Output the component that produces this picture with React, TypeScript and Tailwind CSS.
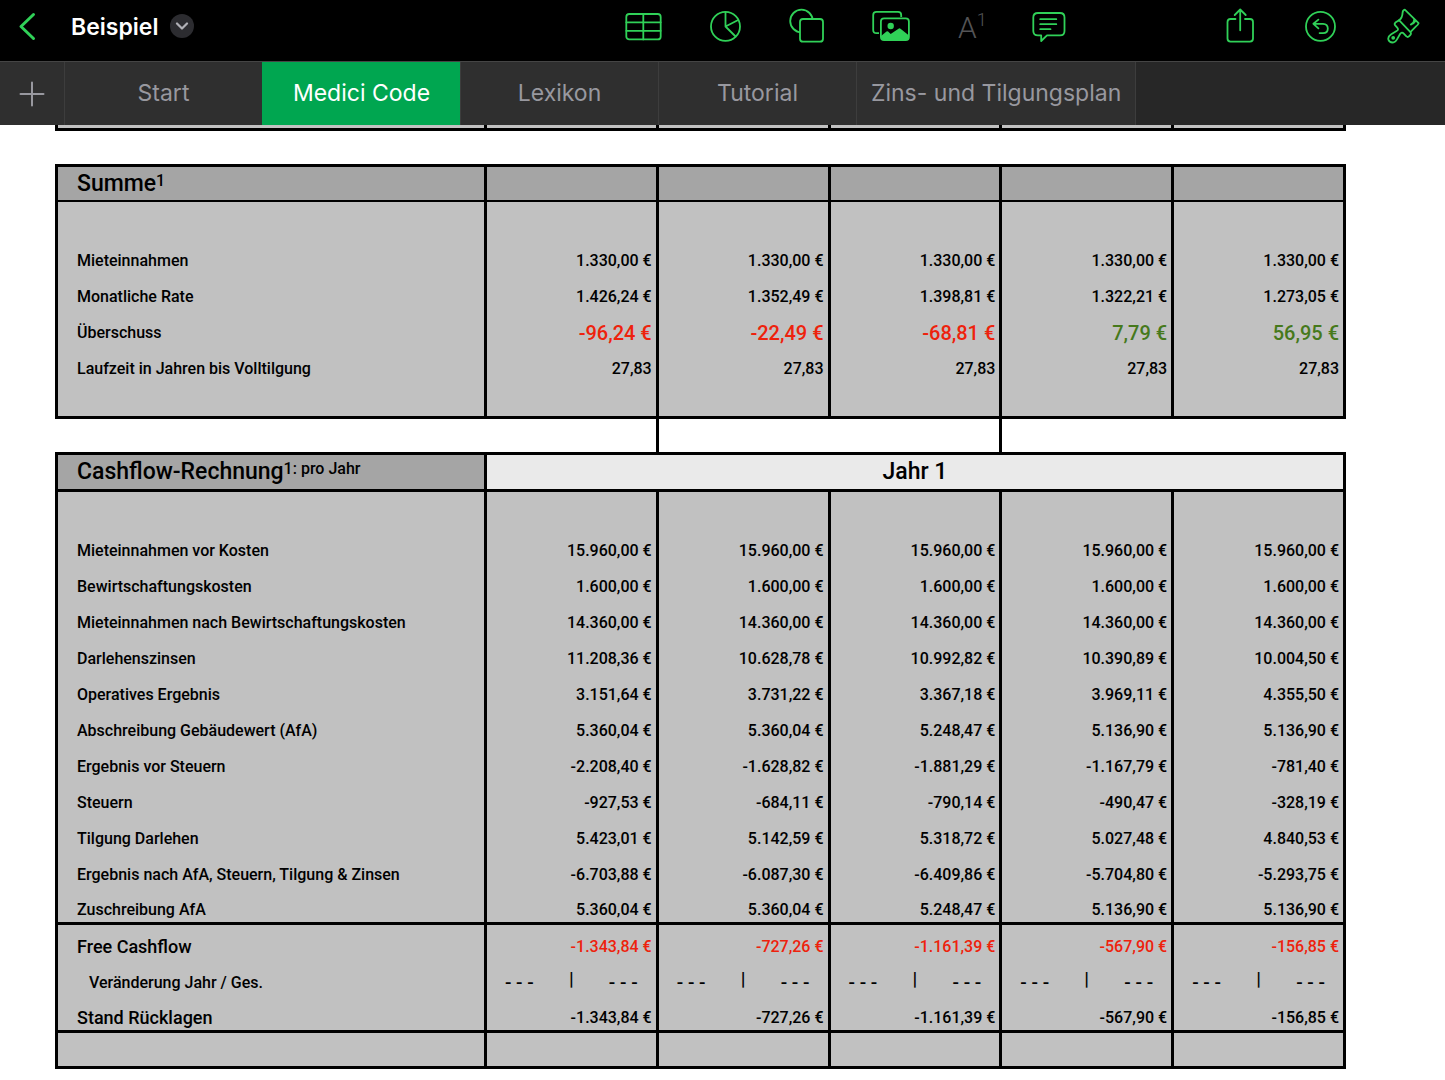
/**
 * Spreadsheet view with toolbar, sheet tabs and the cashflow table
 */

import { useState } from 'react'
import type { ReactNode } from 'react'

interface Row {
  label: string
  values: string[]
  variant?: 'highlight' | 'cashflow' | 'indent' | 'total'
  thickBottom?: boolean
}

const tabs = ['Start', 'Medici Code', 'Lexikon', 'Tutorial', 'Zins- und Tilgungsplan']

const summaryRows: Row[] = [
  { label: 'Mieteinnahmen', values: ['1.330,00 €', '1.330,00 €', '1.330,00 €', '1.330,00 €', '1.330,00 €'] },
  { label: 'Monatliche Rate', values: ['1.426,24 €', '1.352,49 €', '1.398,81 €', '1.322,21 €', '1.273,05 €'] },
  { label: 'Überschuss', values: ['-96,24 €', '-22,49 €', '-68,81 €', '7,79 €', '56,95 €'], variant: 'highlight' },
  { label: 'Laufzeit in Jahren bis Volltilgung', values: ['27,83', '27,83', '27,83', '27,83', '27,83'] }
]

const cashflowRows: Row[] = [
  { label: 'Mieteinnahmen vor Kosten', values: ['15.960,00 €', '15.960,00 €', '15.960,00 €', '15.960,00 €', '15.960,00 €'] },
  { label: 'Bewirtschaftungskosten', values: ['1.600,00 €', '1.600,00 €', '1.600,00 €', '1.600,00 €', '1.600,00 €'] },
  { label: 'Mieteinnahmen nach Bewirtschaftungskosten', values: ['14.360,00 €', '14.360,00 €', '14.360,00 €', '14.360,00 €', '14.360,00 €'] },
  { label: 'Darlehenszinsen', values: ['11.208,36 €', '10.628,78 €', '10.992,82 €', '10.390,89 €', '10.004,50 €'] },
  { label: 'Operatives Ergebnis', values: ['3.151,64 €', '3.731,22 €', '3.367,18 €', '3.969,11 €', '4.355,50 €'] },
  { label: 'Abschreibung Gebäudewert (AfA)', values: ['5.360,04 €', '5.360,04 €', '5.248,47 €', '5.136,90 €', '5.136,90 €'] },
  { label: 'Ergebnis vor Steuern', values: ['-2.208,40 €', '-1.628,82 €', '-1.881,29 €', '-1.167,79 €', '-781,40 €'] },
  { label: 'Steuern', values: ['-927,53 €', '-684,11 €', '-790,14 €', '-490,47 €', '-328,19 €'] },
  { label: 'Tilgung Darlehen', values: ['5.423,01 €', '5.142,59 €', '5.318,72 €', '5.027,48 €', '4.840,53 €'] },
  { label: 'Ergebnis nach AfA, Steuern, Tilgung & Zinsen', values: ['-6.703,88 €', '-6.087,30 €', '-6.409,86 €', '-5.704,80 €', '-5.293,75 €'] },
  { label: 'Zuschreibung AfA', values: ['5.360,04 €', '5.360,04 €', '5.248,47 €', '5.136,90 €', '5.136,90 €'], thickBottom: true },
  { label: 'Free Cashflow', values: ['-1.343,84 €', '-727,26 €', '-1.161,39 €', '-567,90 €', '-156,85 €'], variant: 'cashflow' },
  { label: 'Veränderung Jahr / Ges.', values: ['- - -', '- - -', '- - -', '- - -', '- - -'], variant: 'indent' },
  { label: 'Stand Rücklagen', values: ['-1.343,84 €', '-727,26 €', '-1.161,39 €', '-567,90 €', '-156,85 €'], variant: 'total', thickBottom: true }
]

const columns = [0, 1, 2, 3, 4]

// Negative amounts are red, positive ones green, everything else stays black
const getValueColor = (row: Row, value: string) => {
  if (row.variant !== 'highlight' && row.variant !== 'cashflow') return 'text-black'
  return value.startsWith('-') ? 'text-[#ee220c]' : 'text-[#46791c]'
}

const Icon = ({ width, children }: { width: number; children: ReactNode }) => (
  <svg
    width={width}
    height={36}
    viewBox={`0 0 ${width} 36`}
    fill="none"
    stroke="#30d158"
    strokeWidth="1.8"
    strokeLinecap="round"
    strokeLinejoin="round"
    aria-hidden="true"
  >
    {children}
  </svg>
)

const ToolButton = ({ label, width, children }: { label: string; width: number; children: ReactNode }) => (
  <button type="button" aria-label={label} className="shrink-0">
    <Icon width={width}>{children}</Icon>
  </button>
)

const Toolbar = () => (
  <header className="flex h-[61px] items-center bg-black pr-[25px] pb-[9px] pl-[18px]">
    <button type="button" aria-label="Zurück">
      <svg width="18" height="36" viewBox="0 0 18 36" fill="none" stroke="#30d158" strokeWidth="3" strokeLinecap="round" strokeLinejoin="round" aria-hidden="true">
        <path d="M15.5 6.5 L3 18.5 L15.5 30.5" />
      </svg>
    </button>
    <h1 className="ml-[35px] pt-0.5 text-[23px] leading-8 font-semibold text-white">Beispiel</h1>
    <button type="button" aria-label="Dokumentoptionen" className="ml-3 flex size-6 items-center justify-center rounded-full bg-[#2c2c30]">
      <svg width="14" height="8" viewBox="0 0 14 8" fill="none" stroke="#b0b0b6" strokeWidth="2.2" strokeLinecap="round" strokeLinejoin="round" aria-hidden="true">
        <path d="M2 1.5 L7 6.5 L12 1.5" />
      </svg>
    </button>

    {/* Insert tools */}
    <div className="ml-auto flex items-center gap-12">
      <ToolButton label="Tabelle" width={37}>
        <rect x="1.3" y="6" width="34.4" height="25.4" rx="3" />
        <path d="M18.3 6 V31.4 M1.3 14.3 H35.7 M1.3 22.8 H35.7" />
      </ToolButton>
      <ToolButton label="Diagramm" width={31}>
        <circle cx="15.5" cy="18.4" r="14.5" />
        <path d="M15.5 4 V18.5 L28.2 12 M15.5 18.5 L25.6 28.5" />
      </ToolButton>
      <ToolButton label="Form" width={35}>
        <circle cx="12.5" cy="13" r="11.3" />
        <rect x="11" y="11" width="23" height="22.7" rx="3" fill="#000" />
      </ToolButton>
      <ToolButton label="Medien" width={38}>
        <path d="M7 25.2 H4.5 Q1.2 25.2 1.2 22 V7 Q1.2 3.8 4.5 3.8 H26 Q29.2 3.8 29.2 7 V9" strokeLinecap="butt" />
        <rect x="8.9" y="10.4" width="28" height="21.8" rx="3.2" fill="#000" />
        <circle cx="18.7" cy="18" r="3.2" fill="#30d158" stroke="none" />
        <path d="M9 28 L14.5 23.5 Q15.3 22.8 16.1 23.5 L18.7 26 L26.5 20.7 Q27.5 20 28.5 20.8 L37 27.5 V29.5 Q37 32.2 34 32.2 H12 Q9 32.2 9 29.5 Z" fill="#30d158" stroke="none" />
      </ToolButton>
      <button type="button" aria-label="Fußnote" disabled className="flex h-9 w-[26px] items-start font-[Roboto,sans-serif] font-light text-[#545456]">
        <span className="text-3xl leading-10">A</span>
        <span className="text-lg leading-6">1</span>
      </button>
      <ToolButton label="Kommentar" width={34}>
        <path d="M6 5 H28 Q32.5 5 32.5 9.5 V23 Q32.5 27.4 28 27.4 H15 L9.2 33 V27.4 H6 Q1.3 27.4 1.3 23 V9.5 Q1.3 5 6 5 Z" />
        <path d="M8.2 11.2 H24.3 M8.2 16.2 H24.3 M8.2 21.2 H18.5" />
      </ToolButton>
    </div>

    {/* Document actions */}
    <div className="ml-40 flex items-center gap-[51px]">
      <ToolButton label="Teilen" width={28}>
        <path d="M9.5 11 H4.5 Q1.5 11 1.5 14 V30.6 Q1.5 33.6 4.5 33.6 H24 Q27 33.6 27 30.6 V14 Q27 11 24 11 H19" />
        <path d="M14.2 22.3 V1.8 M8.7 7 L14.2 1.5 L19.7 7" />
      </ToolButton>
      <ToolButton label="Widerrufen" width={31}>
        <circle cx="15.5" cy="18.4" r="14.5" />
        <path d="M13.4 11.6 L8.4 15.8 L13.4 20.3 M8.6 15.8 H18 Q22.8 16 22.8 20.4 Q22.8 25 18 25.1 H14.6" />
      </ToolButton>
      <ToolButton label="Format" width={33}>
        <path d="M12 12.2 Q15.4 10 15.6 4.6 Q15.8 2 17.8 1.6 L31.6 15.2 Q31 16.8 29 18.4 L23.6 23.8" />
        <path d="M12 12.2 L8.4 14.6 Q7 16 8.2 17.4 L10 19.4 Q12.2 21.8 9.6 23 L4.2 26.2 Q.6 28.6 1.4 31.6 Q2.6 35 6.6 34.4 Q8.6 34 10 31.4 L13.2 25.8 Q14.8 23.4 16.8 25.6 L19.4 28.4 Q20.8 29.6 22.2 28.2 L23.4 26.8 Q24.6 25.4 23.2 23.8 Z" />
        <path d="M27.2 11.6 Q27.4 14.6 23.8 16.6 Q26.4 16.4 28.2 13.4" />
        <circle cx="6.2" cy="29.8" r="1" fill="#30d158" />
      </ToolButton>
    </div>
  </header>
)

export default function App() {
  const [activeTab, setActiveTab] = useState('Medici Code')

  const renderRow = (row: Row) => {
    const bottom = row.thickBottom ? 'border-b-3' : ''
    const labelSize = row.variant === 'cashflow' || row.variant === 'total' ? 'text-lg leading-5' : 'text-base leading-5'
    const valueSize = row.variant === 'highlight' ? 'text-xl leading-5' : 'text-base leading-5'

    return (
      <tr key={row.label} className="h-9 bg-[#c1c1c1]">
        <th scope="row" className={`border-x-3 border-black pb-0.5 text-left align-bottom font-medium ${row.variant === 'indent' ? 'pl-[31px]' : 'pl-[19px]'} ${labelSize} ${bottom}`}>
          {row.label}
        </th>
        {row.values.map((value, i) => (
          <td key={i} className={`border-x-3 border-black pb-0.5 text-right align-bottom font-medium ${row.variant === 'indent' ? 'px-[18px]' : 'pr-1'} ${valueSize} ${bottom} ${getValueColor(row, value)}`}>
            {row.variant === 'indent' ? (
              <div className="flex justify-between text-[19px] leading-5">
                <span>{value}</span>
                <span className="leading-3">|</span>
                <span>{value}</span>
              </div>
            ) : (
              value
            )}
          </td>
        ))}
      </tr>
    )
  }

  const renderBlankRow = (height: string, bottom: string) => (
    <tr className={`bg-[#c1c1c1] ${height}`}>
      <td className={`border-x-3 border-black ${bottom}`} />
      {columns.map(i => (
        <td key={i} className={`border-x-3 border-black ${bottom}`} />
      ))}
    </tr>
  )

  return (
    <div className="min-h-screen bg-white font-[Inter,sans-serif]">
      <Toolbar />

      {/* Sheet tabs */}
      <nav className="flex h-16 border-t border-[#454545] bg-[#272727] text-[23px] text-[#98989f]">
        <button type="button" aria-label="Blatt hinzufügen" className="flex w-16 items-center justify-center bg-[#2f2f2f]">
          <svg width="26" height="26" viewBox="0 0 26 26" stroke="#98989f" strokeWidth="2" strokeLinecap="round" aria-hidden="true">
            <path d="M13 1.5 V24.5 M1.5 13 H24.5" />
          </svg>
        </button>
        {tabs.map(tab => (
          <button
            key={tab}
            type="button"
            onClick={() => setActiveTab(tab)}
            className={`min-w-[198px] border-l px-[14px] whitespace-nowrap last:border-r ${activeTab === tab ? 'border-[#00a650] bg-[#00a650] text-white' : 'border-[#3d3d3d] bg-[#2f2f2f]'}`}
          >
            {tab}
          </button>
        ))}
      </nav>

      {/* Sheet */}
      <main className="pr-[99px] pl-[55px] font-[Roboto,sans-serif] text-black">
        <table className="w-full table-fixed border-collapse">
          <colgroup>
            <col className="w-[33.3%]" />
            {columns.map(i => (
              <col key={i} />
            ))}
          </colgroup>
          <tbody>
            {renderBlankRow('h-1', 'border-b-3')}
            <tr className="h-9">
              <td colSpan={6} />
            </tr>

            <tr className="h-9 bg-[#a5a5a5]">
              <th scope="col" className="border-x-3 border-t-3 border-b-2 border-black pt-0.5 pl-[19px] text-left text-[23px] leading-7 font-medium">
                Summe<sup className="-top-[5px] text-base leading-none">1</sup>
              </th>
              {columns.map(i => (
                <td key={i} className="border-x-3 border-t-3 border-b-2 border-black" />
              ))}
            </tr>
            {renderBlankRow('h-9', '')}
            {summaryRows.map(renderRow)}
            {renderBlankRow('h-9', 'border-b-3')}

            <tr className="h-9">
              <td colSpan={2} className="border-r-3 border-black" />
              <td colSpan={2} className="border-r-3 border-black" />
              <td colSpan={2} />
            </tr>

            <tr className="h-[37px]">
              <th scope="col" className="border-3 border-black bg-[#a5a5a5] pl-[19px] text-left text-[23px] leading-7 font-medium whitespace-nowrap">
                Cashflow-Rechnung<sup className="-top-[5px] text-base leading-none">1: pro Jahr</sup>
              </th>
              <th scope="colgroup" colSpan={5} className="border-3 border-black bg-[#eaeaea] text-center text-[23px] leading-7 font-medium">
                Jahr 1
              </th>
            </tr>
            {renderBlankRow('h-[37px]', '')}
            {cashflowRows.map(renderRow)}
            {renderBlankRow('h-9', 'border-b-3')}
          </tbody>
        </table>
      </main>
    </div>
  )
}
